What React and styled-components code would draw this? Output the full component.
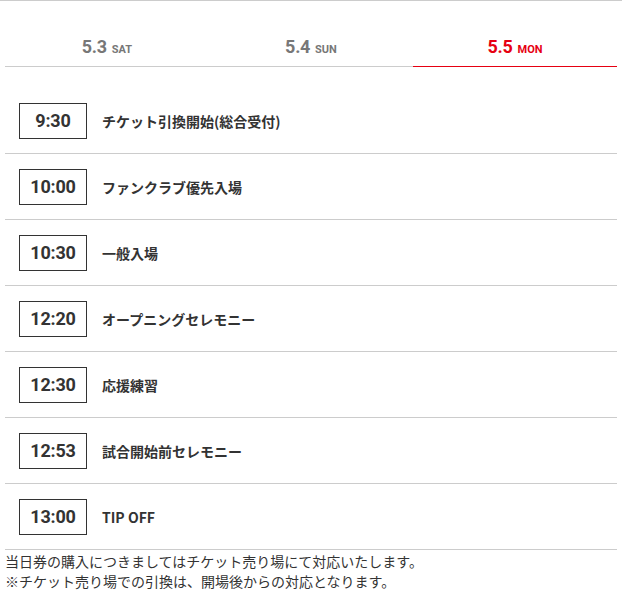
import styled, { createGlobalStyle } from 'styled-components';

const GlobalStyle = createGlobalStyle`
    body {
        margin: 0;
        background: #fff;
        font-family: 'Noto Sans CJK JP', 'Noto Sans', sans-serif;
        color: #333;
    }
`;

const days = [
    { date: '5.3', dow: 'SAT' },
    { date: '5.4', dow: 'SUN' },
    { date: '5.5', dow: 'MON', active: true },
];

const schedule = [
    { time: '9:30', label: 'チケット引換開始(総合受付)' },
    { time: '10:00', label: 'ファンクラブ優先入場' },
    { time: '10:30', label: '一般入場' },
    { time: '12:20', label: 'オープニングセレモニー' },
    { time: '12:30', label: '応援練習' },
    { time: '12:53', label: '試合開始前セレモニー' },
    { time: '13:00', label: 'TIP OFF' },
];

const App = () => {
    return (
        <>
            <GlobalStyle />
            <Page>
                <Container>
                    <Tabs>
                        {days.map(day => (
                            <Tab key={day.date} $active={day.active}>
                                <DayDate>{day.date}</DayDate>
                                <DayName>{day.dow}</DayName>
                            </Tab>
                        ))}
                    </Tabs>
                    <List>
                        {schedule.map(item => (
                            <Row key={item.time}>
                                <TimeBox>{item.time}</TimeBox>
                                <Label>{item.label}</Label>
                            </Row>
                        ))}
                    </List>
                    <Note>
                        当日券の購入につきましてはチケット売り場にて対応いたします。
                        <br />
                        ※チケット売り場での引換は、開場後からの対応となります。
                    </Note>
                </Container>
            </Page>
        </>
    );
};
export default App;

const Page = styled.div`
    border-top: 1px solid #ccc;
`;

const Container = styled.div`
    margin: 0 5px;
`;

const Tabs = styled.div`
    display: grid;
    grid-template-columns: repeat(3, 1fr);
`;

const Tab = styled.div`
    height: 66px;
    box-sizing: border-box;
    display: flex;
    justify-content: center;
    align-items: baseline;
    gap: 5px;
    padding-top: 36px;
    border-bottom: 1px solid ${props => (props.$active ? '#e60012' : '#ccc')};
    color: ${props => (props.$active ? '#e60012' : '#777')};
    font-family: Roboto, 'Liberation Sans', sans-serif;
    font-weight: 700;
    line-height: 20px;
`;

const DayDate = styled.span`
    font-size: 18px;
    letter-spacing: -0.3px;
`;

const DayName = styled.span`
    font-size: 11px;
`;

const List = styled.div`
    padding-top: 21px;
`;

const Row = styled.div`
    height: 66px;
    box-sizing: border-box;
    display: flex;
    align-items: center;
    padding-left: 14px;
    border-bottom: 1px solid #ccc;
`;

const TimeBox = styled.div`
    width: 68px;
    height: 36px;
    box-sizing: border-box;
    border: 1px solid #333;
    display: flex;
    align-items: center;
    justify-content: center;
    font-family: Roboto, 'Liberation Sans', sans-serif;
    font-weight: 700;
    font-size: 18px;
    color: #333;
    letter-spacing: -0.2px;
`;

const Label = styled.div`
    margin-left: 15px;
    font-size: 14px;
    font-weight: 700;
    color: #333;
`;

const Note = styled.p`
    margin: 0;
    padding-top: 1px;
    font-size: 14px;
    line-height: 20px;
    color: #333;
`;
